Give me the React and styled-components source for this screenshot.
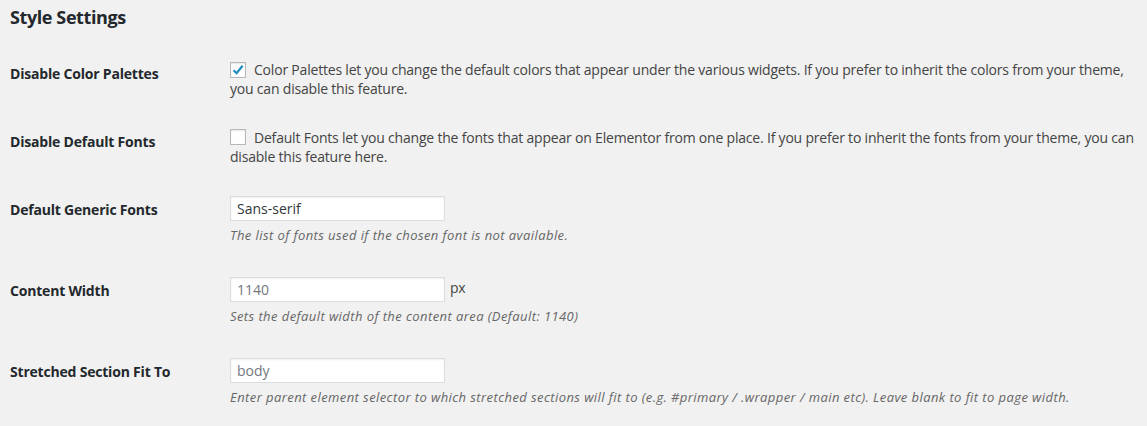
import React from "react";
import styled, { createGlobalStyle } from "styled-components";

const GlobalStyle = createGlobalStyle`
  html, body { margin: 0; padding: 0; background: #f1f1f1; }
  body { font-family: "Open Sans", "Noto Sans", sans-serif; color: #444; font-size: 14px; }
`;

const Page = styled.div`
  padding: 0 6px 0 10px;
  width: 1131px;
`;

const Title = styled.h2`
  margin: 6px 0 16px;
  font-size: 18px;
  line-height: 23px;
  font-weight: 700;
  letter-spacing: -0.4px;
  color: #23282d;
`;

const Row = styled.div`
  display: flex;
  min-height: ${(p) => (p.$tall ? 81 : 68)}px;
  box-sizing: border-box;
`;

const Label = styled.div`
  width: 220px;
  flex: none;
  padding-top: 20px;
  font-weight: 700;
  font-size: 14px;
  line-height: 18px;
  letter-spacing: -0.2px;
  color: #23282d;
`;

const Field = styled.div`
  flex: 1;
  padding-top: 15px;
  font-size: 14px;
  line-height: 19px;
  letter-spacing: -0.2px;
  color: #444;
`;

const Box = styled.span`
  display: inline-flex;
  align-items: center;
  justify-content: center;
  width: 14px;
  height: 14px;
  margin: 0 8px 0 0;
  vertical-align: -2px;
  background: #fff;
  border: 1px solid #b4b9be;
  box-shadow: inset 0 1px 2px rgba(0, 0, 0, 0.1);
`;

const Input = styled.div`
  display: inline-flex;
  align-items: center;
  box-sizing: border-box;
  width: 215px;
  height: 25px;
  padding: 0 6px;
  background: #fff;
  border: 1px solid #ddd;
  box-shadow: inset 0 1px 2px rgba(0, 0, 0, 0.07);
  color: ${(p) => (p.$placeholder ? "#72777c" : "#32373c")};
  font-size: 14px;
  letter-spacing: 0;
`;

const Unit = styled.span`
  margin-left: 5px;
  vertical-align: 2px;
  color: #444;
`;

const Description = styled.p`
  margin: 5px 0 0;
  font-size: 13px;
  line-height: 19px;
  font-style: italic;
  letter-spacing: 0.42px;
  color: #666;
`;

const Check = () => (
  <svg width="14" height="14" viewBox="0 0 14 14">
    <path d="M2.5 7.2 L5.6 10.2 L11.6 2.8" fill="none" stroke="#1e8cbe" strokeWidth="2.2" />
  </svg>
);

const Checkbox = ({ checked }) => <Box>{checked && <Check />}</Box>;

export default function App() {
  return (
    <Page>
      <GlobalStyle />
      <Title>Style Settings</Title>
      <Row>
        <Label>Disable Color Palettes</Label>
        <Field>
          <Checkbox checked />
          Color Palettes let you change the default colors that appear under the various widgets. If you prefer to inherit the colors from your theme, you can disable this feature.
        </Field>
      </Row>
      <Row>
        <Label>Disable Default Fonts</Label>
        <Field>
          <Checkbox />
          Default Fonts let you change the fonts that appear on Elementor from one place. If you prefer to inherit the fonts from your theme, you can disable this feature here.
        </Field>
      </Row>
      <Row $tall>
        <Label>Default Generic Fonts</Label>
        <Field>
          <Input>Sans-serif</Input>
          <Description>The list of fonts used if the chosen font is not available.</Description>
        </Field>
      </Row>
      <Row $tall>
        <Label>Content Width</Label>
        <Field>
          <Input $placeholder>1140</Input>
          <Unit>px</Unit>
          <Description>Sets the default width of the content area (Default: 1140)</Description>
        </Field>
      </Row>
      <Row $tall>
        <Label>Stretched Section Fit To</Label>
        <Field>
          <Input $placeholder>body</Input>
          <Description>Enter parent element selector to which stretched sections will fit to (e.g. #primary / .wrapper / main etc). Leave blank to fit to page width.</Description>
        </Field>
      </Row>
    </Page>
  );
}
